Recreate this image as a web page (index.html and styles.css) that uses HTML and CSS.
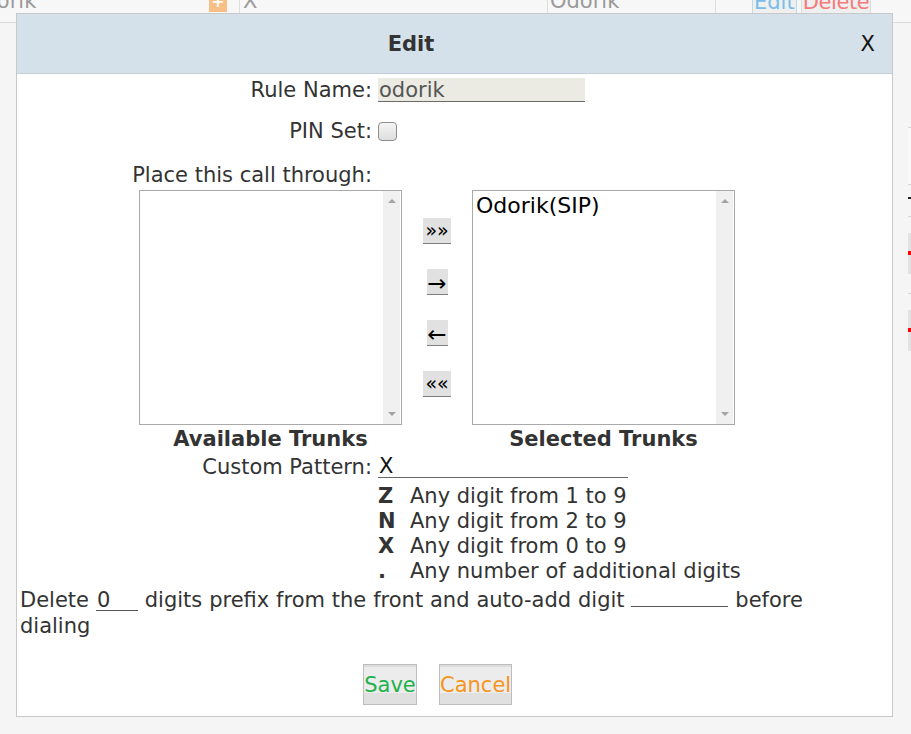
FILE: index.html
```html
<!DOCTYPE html>
<html>
<head>
<meta charset="utf-8">
<title>Edit</title>
<link rel="stylesheet" href="styles.css">
</head>
<body>
<div class="bgrow">
  <div class="bgcells">
    <div class="bc c1"><span class="bname">Odorik</span><span class="plus">+</span></div>
    <div class="bc c2">X</div>
    <div class="bc c3">Odorik</div>
    <div class="bc c4"><span class="lnk edit">Edit</span><span class="lnk delete">Delete</span></div>
  </div>
</div>
<div class="rstrip">
  <div class="rs s1"></div>
  <div class="rs s2"><span class="dash"></span></div>
  <div class="rs s3"><span class="blk"><i></i></span></div>
  <div class="rs s3"><span class="blk"><i></i></span></div>
</div>

<div class="modal">
  <div class="mhead">
    <div class="mtitle">Edit</div>
    <div class="mclose">X</div>
  </div>
  <div class="mbody">
    <div class="frow r1"><span class="lbl">Rule Name:</span><div class="inp ro">odorik</div></div>
    <div class="frow r2"><span class="lbl">PIN Set:</span><span class="chk"></span></div>
    <div class="frow r3"><span class="lbl">Place this call through:</span></div>
    <div class="trunks">
      <div class="tcol">
        <div class="lbox"><div class="litems"></div><div class="sbar"><span class="aup"></span><span class="adn"></span></div></div>
        <div class="cap">Available Trunks</div>
      </div>
      <div class="mvbtns">
        <span class="mv w2">&raquo;&raquo;</span>
        <span class="mv w1 arr">&rarr;</span>
        <span class="mv w1 arr">&larr;</span>
        <span class="mv w2">&laquo;&laquo;</span>
      </div>
      <div class="tcol">
        <div class="lbox"><div class="litems"><div class="opt">Odorik(SIP)</div></div><div class="sbar"><span class="aup"></span><span class="adn"></span></div></div>
        <div class="cap">Selected Trunks</div>
      </div>
    </div>
    <div class="frow r4"><span class="lbl">Custom Pattern:</span><div class="inp cp">X</div></div>
    <div class="legend">
      <div class="lg"><span class="k">Z</span><span>Any digit from 1 to 9</span></div>
      <div class="lg"><span class="k">N</span><span>Any digit from 2 to 9</span></div>
      <div class="lg"><span class="k">X</span><span>Any digit from 0 to 9</span></div>
      <div class="lg"><span class="k">.</span><span>Any number of additional digits</span></div>
    </div>
    <div class="del">Delete <span class="ib ib1">0</span> digits prefix from the front and auto-add digit <span class="ib ib2"></span> before dialing</div>
    <div class="btns">
      <span class="btn save">Save</span>
      <span class="btn cancel">Cancel</span>
    </div>
  </div>
</div>
</body>
</html>
```
FILE: styles.css
```css
html, body {
  margin: 0;
  padding: 0;
}
body {
  width: 911px;
  height: 734px;
  overflow: hidden;
  position: relative;
  background: #f5f5f5;
  font-family: "DejaVu Sans", Verdana, sans-serif;
  font-size: 21px;
  color: #333;
}

/* background table row (behind the dialog) */
.bgrow {
  height: 22px;
  overflow: hidden;
  border-bottom: 1px solid #dcdcdc;
  background: #f7f7f7;
}
.bgcells {
  display: flex;
  height: 37px;
  margin-top: -15px;
  line-height: 32px;
  color: #9a9a9a;
}
.bc {
  height: 37px;
  border-right: 1px solid #dedede;
  box-sizing: border-box;
  white-space: nowrap;
  overflow: hidden;
}
.c1 {
  width: 240px;
  display: flex;
  justify-content: space-between;
}
.bname { margin-left: -33px; }
.plus {
  width: 18px;
  height: 27px;
  margin-right: 12px;
  background: #f7be86;
  color: #fff;
  font-weight: bold;
  font-size: 16px;
  line-height: 34px;
  text-align: center;
}
.c2 { width: 308px; padding-left: 3px; }
.c3 { width: 168px; padding-left: 2px; }
.c4 { width: 180px; border-right: none; padding-left: 36px; display: flex; gap: 4px; }
.lnk {
  display: inline-block;
  height: 37px;
  background: #efefef;
  border: 1px solid #dcdcdc;
  box-sizing: border-box;
  padding: 0 1px;
}
.edit { color: #79bde8; border-color: #bcd9ee; }
.delete { color: #f27b7b; letter-spacing: -0.4px; }

.rstrip {
  position: absolute;
  left: 908px;
  top: 127px;
  width: 3px;
  display: flex;
  flex-direction: column;
}
.rs { border-top: 1px solid #d8d8d8; }
.s1 { height: 56px; background: #f9f9f9; }
.s2 { height: 31px; }
.dash { display: block; margin-top: 12px; width: 3px; height: 2px; background: #222; }
.s3 { height: 76px; }
.blk { display: block; margin-top: 16px; height: 41px; background: #e2e2e2; padding-top: 18px; box-sizing: border-box; }
.blk i { display: block; height: 4px; width: 3px; background: #f00; }

/* dialog */
.modal {
  position: absolute;
  left: 16px;
  top: 13px;
  width: 875px;
  border: 1px solid #c9c9c9;
  background: #fff;
  padding-bottom: 11px;
}
.mhead {
  height: 59px;
  background: #d5e1ea;
  border-bottom: 1px solid #c3ced7;
  display: flex;
  align-items: center;
}
.mtitle {
  flex: 1;
  text-align: center;
  font-weight: bold;
  color: #333;
}
.mclose {
  width: 87px;
  box-sizing: border-box;
  text-align: right;
  padding-right: 17px;
  color: #111;
}

.frow {
  display: flex;
  align-items: center;
  height: 24px;
  line-height: 26px;
}
.lbl {
  width: 355px;
  flex: none;
  text-align: right;
  margin-right: 6px;
  white-space: nowrap;
}
.r1 { margin-top: 4px; }
.r2 { margin-top: 17px; }
.r3 { margin-top: 20px; }
.r4 { margin-top: 5px; height: 23px; }

.inp {
  box-sizing: border-box;
  padding-left: 1px;
  white-space: nowrap;
}
.ro {
  width: 207px;
  height: 24px;
  line-height: 24px;
  background: #ebebe4;
  border-bottom: 1px solid #6a6a6a;
  color: #555;
}
.cp {
  width: 250px;
  height: 23px;
  line-height: 23px;
  border-bottom: 1px solid #666;
  color: #111;
}
.chk {
  width: 19px;
  height: 19px;
  box-sizing: border-box;
  border: 1px solid #8e8e8e;
  border-radius: 4px;
  background: linear-gradient(#f4f4f4, #dedede);
}

.trunks {
  display: flex;
  margin-top: 3px;
  margin-left: 122px;
}
.tcol { width: 263px; }
.lbox {
  height: 235px;
  box-sizing: border-box;
  border: 1px solid #a9a9a9;
  display: flex;
  background: #fff;
}
.litems {
  flex: 1;
  padding: 2px 3px;
}
.opt {
  font-size: 22px;
  line-height: 26px;
  color: #000;
}
.sbar {
  width: 17px;
  margin-right: 1px;
  background: #f0f0f0;
  display: flex;
  flex-direction: column;
  align-items: center;
  justify-content: space-between;
  padding: 8px 0;
  box-sizing: border-box;
}
.aup {
  width: 0;
  height: 0;
  border-left: 4px solid transparent;
  border-right: 4px solid transparent;
  border-bottom: 4px solid #a3a3a3;
}
.adn {
  width: 0;
  height: 0;
  border-left: 4px solid transparent;
  border-right: 4px solid transparent;
  border-top: 4px solid #a3a3a3;
}
.cap {
  margin-top: 1px;
  height: 24px;
  line-height: 26px;
  text-align: center;
  font-weight: bold;
}
.mvbtns {
  width: 70px;
  display: flex;
  flex-direction: column;
  align-items: center;
  padding-top: 28px;
  gap: 25px;
}
.mv {
  height: 26px;
  box-sizing: border-box;
  background: #e1e1e1;
  border-bottom: 1px solid #7e7e7e;
  color: #000;
  font-size: 19px;
  line-height: 25px;
  text-align: center;
  overflow: hidden;
}
.w2 { width: 28px; }
.w1 { width: 21px; }
.arr { font-size: 23px; line-height: 28px; }

.legend {
  margin-top: 5px;
  margin-left: 361px;
}
.lg {
  display: flex;
  height: 25px;
  line-height: 27px;
  white-space: nowrap;
}
.k {
  width: 32px;
  font-weight: bold;
}

.del {
  margin-top: 2px;
  padding: 0 25px 0 3px;
  line-height: 26px;
  word-spacing: 0.2px;
}
.ib {
  display: inline-block;
  height: 22px;
  line-height: 22px;
  border-bottom: 1px solid #555;
  box-sizing: border-box;
  padding-left: 1px;
  vertical-align: baseline;
}
.ib1 { width: 42px; }
.ib2 { width: 97px; }

.btns {
  margin-top: 25px;
  display: flex;
  gap: 22px;
  padding-left: 346px;
}
.btn {
  height: 41px;
  box-sizing: border-box;
  border: 1px solid #bdbdbd;
  background: linear-gradient(#dcdcdc 0, #dcdcdc 2px, #ececec 2px, #ececec 72%, #e0e0e0 72%);
  line-height: 41px;
  text-align: center;
  white-space: nowrap;
}
.save { width: 54px; color: #22b24c; }
.cancel { width: 73px; color: #f7941d; }
```
